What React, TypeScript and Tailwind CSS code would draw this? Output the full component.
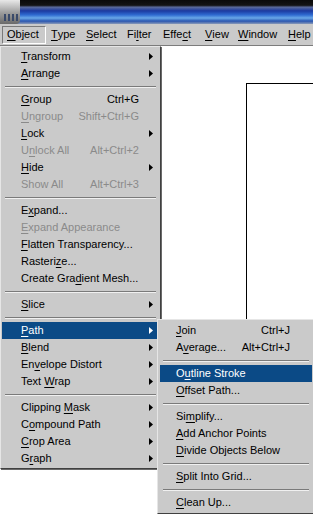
import React from "react";

type Item =
  | { sep: true }
  | {
      sep?: false;
      label: React.ReactNode;
      shortcut?: string;
      sub?: boolean;
      disabled?: boolean;
      active?: boolean;
    };

// letter with mnemonic underline
const U = ({ c }: { c: string }) => <span className="underline underline-offset-[2px]">{c}</span>;

const mainItems: Item[] = [
  { label: <><U c="T" />ransform</>, sub: true },
  { label: <><U c="A" />rrange</>, sub: true },
  { sep: true },
  { label: <><U c="G" />roup</>, shortcut: "Ctrl+G" },
  { label: <><U c="U" />ngroup</>, shortcut: "Shift+Ctrl+G", disabled: true },
  { label: <><U c="L" />ock</>, sub: true },
  { label: <>U<U c="n" />lock All</>, shortcut: "Alt+Ctrl+2", disabled: true },
  { label: <><U c="H" />ide</>, sub: true },
  { label: <>Show All</>, shortcut: "Alt+Ctrl+3", disabled: true },
  { sep: true },
  { label: <>E<U c="x" />pand...</> },
  { label: <><U c="E" />xpand Appearance</>, disabled: true },
  { label: <><U c="F" />latten Transparency...</> },
  { label: <>Rasteri<U c="z" />e...</> },
  { label: <>Create Gra<U c="d" />ient Mesh...</> },
  { sep: true },
  { label: <><U c="S" />lice</>, sub: true },
  { sep: true },
  { label: <><U c="P" />ath</>, sub: true, active: true },
  { label: <><U c="B" />lend</>, sub: true },
  { label: <>En<U c="v" />elope Distort</>, sub: true },
  { label: <>Text <U c="W" />rap</>, sub: true },
  { sep: true },
  { label: <>Clipping <U c="M" />ask</>, sub: true },
  { label: <>C<U c="o" />mpound Path</>, sub: true },
  { label: <><U c="C" />rop Area</>, sub: true },
  { label: <>G<U c="r" />aph</>, sub: true },
];

const pathItems: Item[] = [
  { label: <><U c="J" />oin</>, shortcut: "Ctrl+J" },
  { label: <>A<U c="v" />erage...</>, shortcut: "Alt+Ctrl+J" },
  { sep: true },
  { label: <>O<U c="u" />tline Stroke</>, active: true },
  { label: <><U c="O" />ffset Path...</> },
  { sep: true },
  { label: <>Si<U c="m" />plify...</> },
  { label: <><U c="A" />dd Anchor Points</> },
  { label: <><U c="D" />ivide Objects Below</> },
  { sep: true },
  { label: <><U c="S" />plit Into Grid...</> },
  { sep: true },
  { label: <><U c="C" />lean Up...</> },
];

const Arrow = ({ white }: { white?: boolean }) => (
  <svg width="4" height="7" viewBox="0 0 4 7" className="shrink-0">
    <path d="M0 0 L4 3.5 L0 7 Z" fill={white ? "#ffffff" : "#000000"} />
  </svg>
);

const MenuRows = ({ items, rowPad, shortcutRight }: { items: Item[]; rowPad: string; shortcutRight: string }) => (
  <>
    {items.map((it, i) =>
      it.sep ? (
        <div key={i} className="h-[9px] flex items-center px-[3px]">
          <div className="w-full h-[2px] border-t border-t-[#7a7a7a] border-b border-b-[#f0f0f0]" />
        </div>
      ) : (
        <div
          key={i}
          className={`h-[17px] flex items-center pr-[6px] ${rowPad} ${
            it.active ? "bg-[#0b4a86] text-white" : it.disabled ? "text-[#8a8a8a]" : "text-black"
          }`}
        >
          <span className="flex-1 whitespace-nowrap">{it.label}</span>
          {it.shortcut && <span className={`whitespace-nowrap ${shortcutRight}`}>{it.shortcut}</span>}
          {it.sub && <Arrow white={it.active} />}
        </div>
      )
    )}
  </>
);

const menuNames: { pre: string; u: string; post: string; w: string }[] = [
  { pre: "", u: "O", post: "bject", w: "w-[44px]" },
  { pre: "", u: "T", post: "ype", w: "w-[35px]" },
  { pre: "", u: "S", post: "elect", w: "w-[41px]" },
  { pre: "Fi", u: "l", post: "ter", w: "w-[36px]" },
  { pre: "Effe", u: "c", post: "t", w: "w-[42px]" },
  { pre: "", u: "V", post: "iew", w: "w-[33px]" },
  { pre: "", u: "W", post: "indow", w: "w-[50px]" },
  { pre: "", u: "H", post: "elp", w: "w-[30px]" },
];

export default function App() {
  return (
    <div
      className="relative w-[313px] h-[514px] overflow-hidden bg-white text-[11px] leading-none select-none"
      style={{ fontFamily: '"Liberation Sans", Arial, sans-serif' }}
    >
      {/* title bar */}
      <div className="h-[24px] flex bg-[linear-gradient(#0a0a0a_0%,#141414_22%,#5a6a9a_30%,#1c3aa0_45%,#2e6ad0_62%,#6aa8e8_75%,#2a56b0_88%,#8a9ab8_100%)]">
        <div className="w-[20px] h-[24px] rounded-br-[4px] bg-[linear-gradient(#e8e8e8,#9a9a9a_55%,#6a6a6a)] flex items-end gap-[2px] pl-[4px] pb-[3px]">
          <div className="w-[2px] h-[7px] bg-[#3a4a6a]" />
          <div className="w-[2px] h-[7px] bg-[#3a4a6a]" />
          <div className="w-[2px] h-[7px] bg-[#3a4a6a]" />
          <div className="w-[2px] h-[7px] bg-[#3a4a6a]" />
        </div>
      </div>

      {/* menubar */}
      <div className="h-[22px] flex items-center bg-[#cacaca] border-b border-b-[#7c7c7c] pl-[2px]">
        {menuNames.map((m, i) => (
          <div
            key={i}
            className={`h-[18px] shrink-0 flex items-center pl-[4px] whitespace-nowrap ${m.w} ${
              i === 0 ? "border border-t-[#7a7a7a] border-l-[#7a7a7a] border-r-white border-b-white" : "border border-transparent"
            }`}
          >
            {m.pre}
            <U c={m.u} />
            {m.post}
          </div>
        ))}
      </div>

      {/* canvas */}
      <div className="pt-[37px] pl-[246px]">
        <div className="h-[460px] border-l border-t border-black" />
      </div>

      {/* Object menu */}
      <div className="absolute left-0 top-[46px] w-[161px] bg-[#cacaca] border border-t-[#e6e6e6] border-l-[#e6e6e6] border-r-[#404040] border-b-[#404040] shadow-[1px_1px_0_#6a6a6a] p-[1px]">
        <MenuRows items={mainItems} rowPad="pl-[19px]" shortcutRight="mr-[14px]" />
      </div>

      {/* Path submenu */}
      <div className="absolute left-[157px] top-[319px] w-[158px] bg-[#cacaca] border border-t-[#e6e6e6] border-l-[#e6e6e6] border-r-[#404040] border-b-[#404040] shadow-[1px_1px_0_#6a6a6a] p-[2px]">
        <MenuRows items={pathItems} rowPad="pl-[16px]" shortcutRight="mr-[16px]" />
      </div>
    </div>
  );
}
